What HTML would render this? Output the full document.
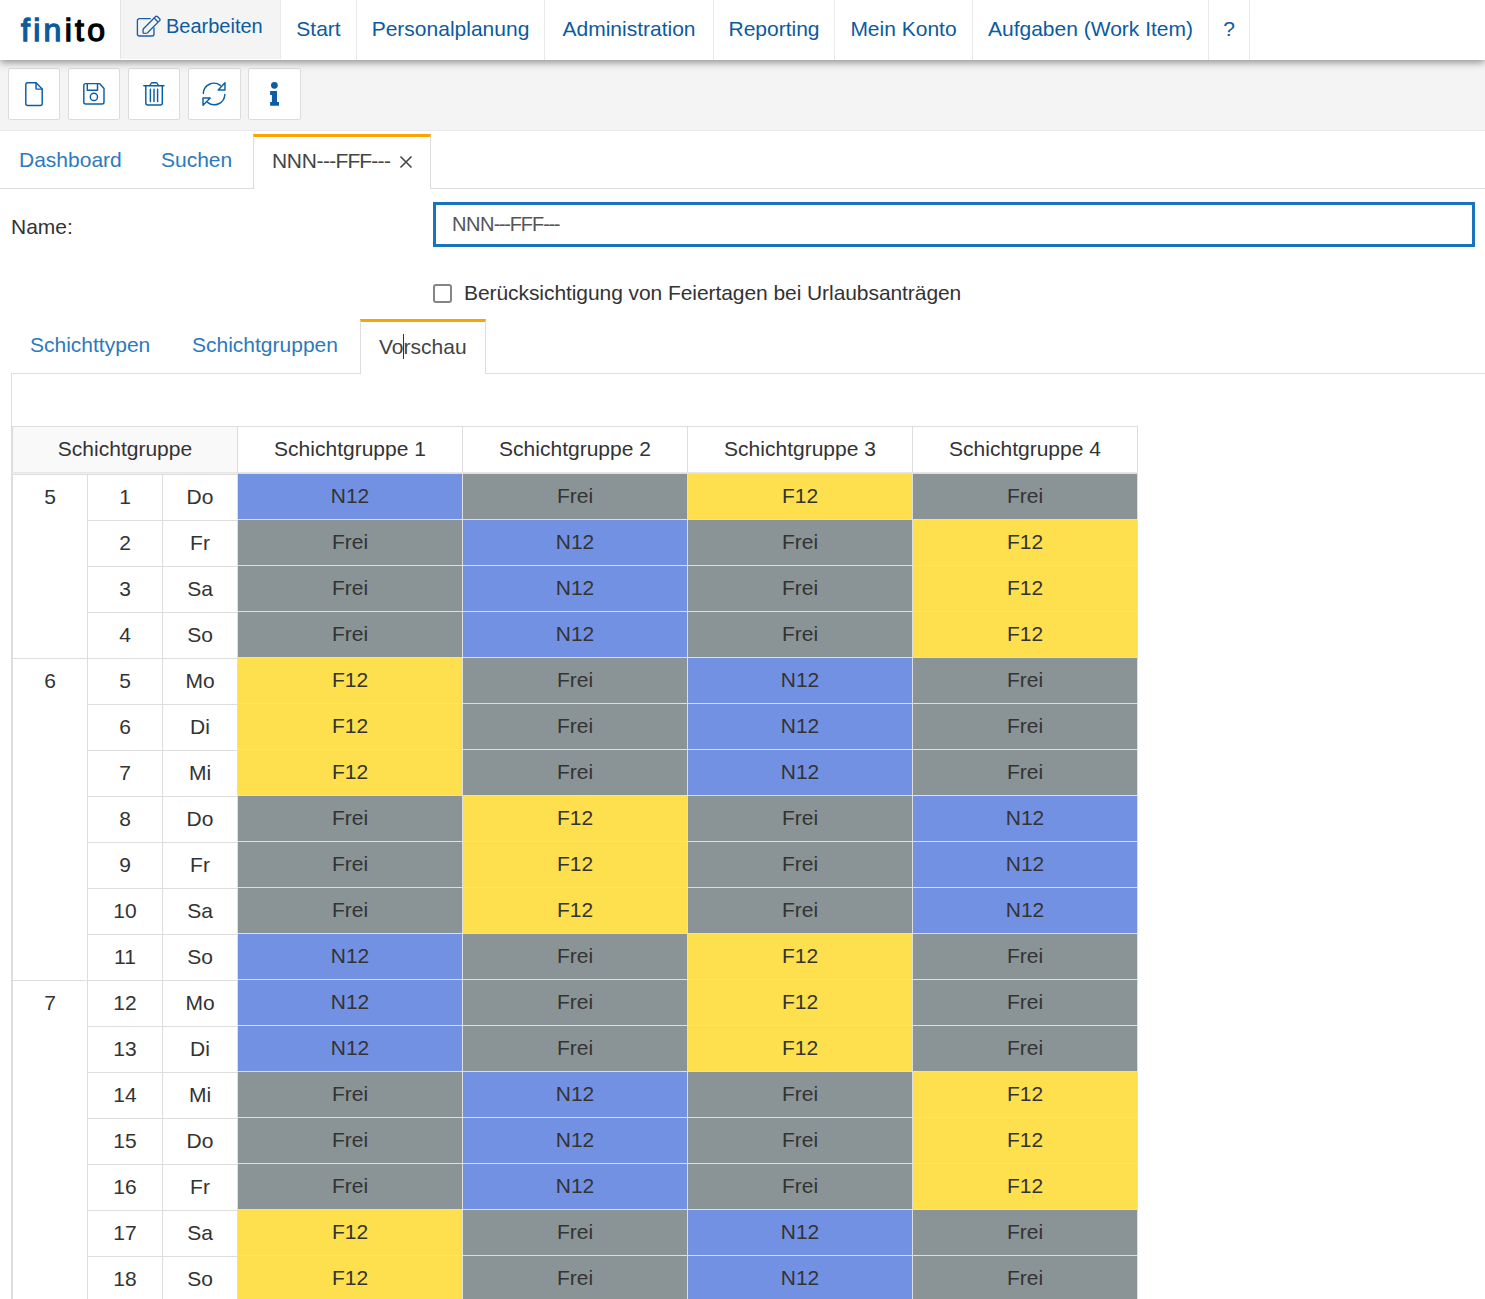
<!DOCTYPE html>
<html>
<head>
<meta charset="utf-8">
<style>
*{box-sizing:border-box;margin:0;padding:0}
html,body{width:1485px;height:1299px;overflow:hidden;background:#fff}
body{font-family:"Liberation Sans",sans-serif;color:#333;position:relative}
.abs{position:absolute}
#hdr{position:absolute;left:0;top:0;width:1485px;height:60px;background:#fff;box-shadow:0 2px 8px rgba(0,0,0,.45);z-index:5}
.logo{position:absolute;left:21px;top:10px;font-weight:normal;font-size:32px;letter-spacing:3.3px;line-height:40px;-webkit-text-stroke:1.3px currentColor}
.logo .b{color:#0b5a9e}.logo .k{color:#000}
.nav{position:absolute;top:0;height:60px;border-right:1px solid #e9e9e9;color:#0b5b9f;font-size:21px;line-height:58px;text-align:center;white-space:nowrap}
.nav.act{background:#f4f4f4;border-left:1px solid #e4e4e4;height:59px;line-height:56px}
#tb{position:absolute;left:0;top:60px;width:1485px;height:71px;background:#f4f4f4;border-bottom:1px solid #e9e9e9}
.btn{position:absolute;top:68px;width:52px;height:52px;background:#fff;border:1px solid #dcdcdc;border-radius:2px;z-index:2}
.tab{position:absolute;font-size:21px;line-height:24px;white-space:nowrap}
.lnk{color:#2c79bd}
.line{position:absolute;height:1px;background:#ddd}
.vl{position:absolute;width:1px;background:#ddd}
.tc{position:absolute;height:45px;line-height:43px;text-align:center;font-size:21px;color:#333}
.sc{color:#333}
.nb{background:#7391e3}.gr{background:#8a9395}.ye{background:#fee04f}
.hl{position:absolute;height:1px;background:#ddd}
</style>
</head>
<body>
<div id="hdr">
  <div class="logo"><span class="b">fin</span><span class="k">ito</span></div>
  <div class="nav act" style="left:120px;width:161px"><svg width="26" height="24" viewBox="0 0 26 24" style="position:absolute;left:14px;top:14px" fill="none" stroke="#1d5ca6" stroke-width="1.35" stroke-linejoin="round" stroke-linecap="round"><path d="M15.2 4.6 H4.4 a2 2 0 0 0 -2 2 V20 a2 2 0 0 0 2 2 H17 a2 2 0 0 0 2 -2 V14"/><path d="M8.2 15 L20.6 2.6 a1.3 1.3 0 0 1 1.8 0 L24.6 4.8 a1.3 1.3 0 0 1 0 1.8 L12.3 19 Q11 19.6 8.3 19.2 Q7.8 16.5 8.2 15 Z"/><path d="M19.1 4.1 L22.5 7.5"/></svg><span style="position:absolute;left:45px;top:-2px;font-size:20px">Bearbeiten</span></div>
  <div class="nav" style="left:281px;width:76px">Start</div>
  <div class="nav" style="left:357px;width:188px">Personalplanung</div>
  <div class="nav" style="left:545px;width:169px">Administration</div>
  <div class="nav" style="left:714px;width:121px">Reporting</div>
  <div class="nav" style="left:835px;width:138px">Mein Konto</div>
  <div class="nav" style="left:973px;width:236px">Aufgaben (Work Item)</div>
  <div class="nav" style="left:1209px;width:41px">?</div>
</div>
<div id="tb"></div>
<div class="btn" style="left:8px"></div>
<div class="btn" style="left:68px"></div>
<div class="btn" style="left:128px"></div>
<div class="btn" style="left:188px;width:53px"></div>
<div class="btn" style="left:248px;width:53px"></div>
<svg class="abs" style="left:0;top:0;z-index:3" width="320" height="130" viewBox="0 0 320 130" fill="none" stroke="#0b5ea5" stroke-width="1.45" stroke-linejoin="round" stroke-linecap="round">
  <!-- file -->
  <path d="M27.8 82.8 H36 L42.2 89 V103.5 a2 2 0 0 1 -2 2 H27.8 a2 2 0 0 1 -2 -2 V84.8 a2 2 0 0 1 2 -2 Z"/>
  <path d="M36 82.8 V88.6 a0.5 0.5 0 0 0 0.5 0.5 H42.2"/>
  <!-- save -->
  <path d="M85.8 83.6 H99.5 L104 88.6 V102 a2 2 0 0 1 -2 2 H85.8 a2 2 0 0 1 -2 -2 V85.6 a2 2 0 0 1 2 -2 Z"/>
  <path d="M87.3 83.6 V90.3 H97.5 V83.6"/>
  <circle cx="93.9" cy="96.9" r="3.6"/>
  <!-- trash -->
  <path d="M143.8 85.8 H164"/>
  <path d="M149.8 85.5 L151 83.5 a1.5 1.5 0 0 1 1.3 -0.8 H156 a1.5 1.5 0 0 1 1.3 0.8 L158.5 85.5"/>
  <path d="M145.8 86 V103 a2 2 0 0 0 2 2 H160.3 a2 2 0 0 0 2 -2 V86"/>
  <path d="M150.4 89.3 V101.6 M154 89.3 V101.6 M157.6 89.3 V101.6"/>
  <!-- sync -->
  <path d="M203.3 93.4 A10.6 10.6 0 0 1 220.3 85.4"/>
  <path d="M225 82.8 V89.9 H218.2 Z"/>
  <path d="M224.8 94.4 A10.6 10.6 0 0 1 207.6 102.4"/>
  <path d="M203 105.2 V98 H210.2 Z"/>
</svg>
<svg class="abs" style="left:0;top:0;z-index:3" width="320" height="130" viewBox="0 0 320 130" fill="#0b5ea5">
  <circle cx="274.4" cy="85.3" r="3.4"/>
  <path d="M270.1 91 H277 V102.1 H279 V105.8 H270.1 V102.1 H271.9 V95 H270.1 Z"/>
</svg>

<!-- top tabs -->
<div class="line" style="left:0;top:188px;width:1485px"></div>
<div class="tab lnk" style="left:19px;top:148px">Dashboard</div>
<div class="tab lnk" style="left:161px;top:148px">Suchen</div>
<div class="abs" style="left:253px;top:134px;width:178px;height:55px;background:#fff;border:1px solid #ddd;border-top:3px solid #f9a400;border-bottom:none"></div>
<div class="tab" style="left:272px;top:149px;color:#444"><span style="letter-spacing:-0.3px">NNN</span><span style="letter-spacing:-0.7px">---</span><span style="letter-spacing:-0.9px">FFF</span><span style="letter-spacing:-0.7px">---</span></div>
<svg class="abs" style="left:399px;top:155px" width="14" height="14" viewBox="0 0 14 14" stroke="#444" stroke-width="1.6"><path d="M1.5 1.5 L12.5 12.5 M12.5 1.5 L1.5 12.5"/></svg>

<!-- form -->
<div class="tab" style="left:11px;top:215px;color:#333">Name:</div>
<div class="abs" style="left:433px;top:202px;width:1042px;height:45px;border:3px solid #1a74bd"></div>
<div class="tab" style="left:452px;top:212px;color:#555;font-size:20px"><span style="letter-spacing:-0.5px">NNN</span><span style="letter-spacing:-1.4px">---</span><span style="letter-spacing:-1px">FFF</span><span style="letter-spacing:-1.4px">---</span></div>
<div class="abs" style="left:433px;top:284px;width:19px;height:19px;border:2px solid #858585;border-radius:3px"></div>
<div class="tab" style="left:464px;top:281px;color:#333;letter-spacing:-0.07px">Berücksichtigung von Feiertagen bei Urlaubsanträgen</div>

<!-- inner tabs -->
<div class="line" style="left:11px;top:373px;width:1474px"></div>
<div class="vl" style="left:11px;top:373px;height:926px"></div>
<div class="tab lnk" style="left:30px;top:333px">Schichttypen</div>
<div class="tab lnk" style="left:192px;top:333px">Schichtgruppen</div>
<div class="abs" style="left:360px;top:319px;width:126px;height:55px;background:#fff;border:1px solid #ddd;border-top:3px solid #f9a400;border-bottom:none"></div>
<div class="tab" style="left:379px;top:335px;color:#444">Vorschau</div>
<div class="abs" style="left:403px;top:334px;width:1px;height:25px;background:#333"></div>

<!-- table -->
<div class="abs" style="left:12px;top:426px;width:1126px;height:873px;border:1px solid #ddd;border-bottom:none"></div>
<div class="abs" style="left:13px;top:427px;width:224px;height:45px;background:#f9f9f9"></div>
<div class="abs" style="left:12px;top:472px;width:1126px;height:1px;background:#e6e6e6"></div>
<div class="abs" style="left:12px;top:473px;width:1126px;height:1px;background:#eeeeee"></div>
<div class="abs" style="left:12px;top:474px;width:225px;height:1px;background:#dddddd"></div>
<div class="vl" style="left:237px;top:427px;height:872px"></div>
<div class="vl" style="left:462px;top:427px;height:45px"></div>
<div class="vl" style="left:687px;top:427px;height:45px"></div>
<div class="vl" style="left:912px;top:427px;height:45px"></div>
<div class="vl" style="left:87px;top:475px;height:824px"></div>
<div class="vl" style="left:162px;top:475px;height:824px"></div>
<div class="tc" style="left:13px;top:427px;width:224px">Schichtgruppe</div>
<div class="tc" style="left:238px;top:427px;width:224px">Schichtgruppe 1</div>
<div class="tc" style="left:463px;top:427px;width:224px">Schichtgruppe 2</div>
<div class="tc" style="left:688px;top:427px;width:224px">Schichtgruppe 3</div>
<div class="tc" style="left:913px;top:427px;width:224px">Schichtgruppe 4</div>
<div class="abs" style="left:237px;top:473px;width:901px;height:826px;background:#dedede"></div>
<div id="tbody">

<div class="tc" style="left:13px;top:475px;width:74px">5</div>
<div class="tc" style="left:88px;top:475px;width:74px">1</div>
<div class="tc" style="left:163px;top:475px;width:74px">Do</div>
<div class="tc sc nb" style="left:238px;top:474px;width:224px">N12</div>
<div class="tc sc gr" style="left:463px;top:474px;width:224px">Frei</div>
<div class="tc sc ye" style="left:688px;top:474px;width:224px">F12</div>
<div class="tc sc gr" style="left:913px;top:474px;width:224px">Frei</div>
<div class="hl" style="left:87px;top:520px;width:150px"></div>
<div class="tc" style="left:88px;top:521px;width:74px">2</div>
<div class="tc" style="left:163px;top:521px;width:74px">Fr</div>
<div class="tc sc gr" style="left:238px;top:520px;width:224px">Frei</div>
<div class="tc sc nb" style="left:463px;top:520px;width:224px">N12</div>
<div class="tc sc gr" style="left:688px;top:520px;width:224px">Frei</div>
<div class="tc sc ye" style="left:913px;top:520px;width:224px">F12</div>
<div class="hl" style="left:87px;top:566px;width:150px"></div>
<div class="tc" style="left:88px;top:567px;width:74px">3</div>
<div class="tc" style="left:163px;top:567px;width:74px">Sa</div>
<div class="tc sc gr" style="left:238px;top:566px;width:224px">Frei</div>
<div class="tc sc nb" style="left:463px;top:566px;width:224px">N12</div>
<div class="tc sc gr" style="left:688px;top:566px;width:224px">Frei</div>
<div class="tc sc ye" style="left:913px;top:566px;width:224px">F12</div>
<div class="hl" style="left:87px;top:612px;width:150px"></div>
<div class="tc" style="left:88px;top:613px;width:74px">4</div>
<div class="tc" style="left:163px;top:613px;width:74px">So</div>
<div class="tc sc gr" style="left:238px;top:612px;width:224px">Frei</div>
<div class="tc sc nb" style="left:463px;top:612px;width:224px">N12</div>
<div class="tc sc gr" style="left:688px;top:612px;width:224px">Frei</div>
<div class="tc sc ye" style="left:913px;top:612px;width:224px">F12</div>
<div class="hl" style="left:12px;top:658px;width:225px"></div>
<div class="tc" style="left:13px;top:659px;width:74px">6</div>
<div class="tc" style="left:88px;top:659px;width:74px">5</div>
<div class="tc" style="left:163px;top:659px;width:74px">Mo</div>
<div class="tc sc ye" style="left:238px;top:658px;width:224px">F12</div>
<div class="tc sc gr" style="left:463px;top:658px;width:224px">Frei</div>
<div class="tc sc nb" style="left:688px;top:658px;width:224px">N12</div>
<div class="tc sc gr" style="left:913px;top:658px;width:224px">Frei</div>
<div class="hl" style="left:87px;top:704px;width:150px"></div>
<div class="tc" style="left:88px;top:705px;width:74px">6</div>
<div class="tc" style="left:163px;top:705px;width:74px">Di</div>
<div class="tc sc ye" style="left:238px;top:704px;width:224px">F12</div>
<div class="tc sc gr" style="left:463px;top:704px;width:224px">Frei</div>
<div class="tc sc nb" style="left:688px;top:704px;width:224px">N12</div>
<div class="tc sc gr" style="left:913px;top:704px;width:224px">Frei</div>
<div class="hl" style="left:87px;top:750px;width:150px"></div>
<div class="tc" style="left:88px;top:751px;width:74px">7</div>
<div class="tc" style="left:163px;top:751px;width:74px">Mi</div>
<div class="tc sc ye" style="left:238px;top:750px;width:224px">F12</div>
<div class="tc sc gr" style="left:463px;top:750px;width:224px">Frei</div>
<div class="tc sc nb" style="left:688px;top:750px;width:224px">N12</div>
<div class="tc sc gr" style="left:913px;top:750px;width:224px">Frei</div>
<div class="hl" style="left:87px;top:796px;width:150px"></div>
<div class="tc" style="left:88px;top:797px;width:74px">8</div>
<div class="tc" style="left:163px;top:797px;width:74px">Do</div>
<div class="tc sc gr" style="left:238px;top:796px;width:224px">Frei</div>
<div class="tc sc ye" style="left:463px;top:796px;width:224px">F12</div>
<div class="tc sc gr" style="left:688px;top:796px;width:224px">Frei</div>
<div class="tc sc nb" style="left:913px;top:796px;width:224px">N12</div>
<div class="hl" style="left:87px;top:842px;width:150px"></div>
<div class="tc" style="left:88px;top:843px;width:74px">9</div>
<div class="tc" style="left:163px;top:843px;width:74px">Fr</div>
<div class="tc sc gr" style="left:238px;top:842px;width:224px">Frei</div>
<div class="tc sc ye" style="left:463px;top:842px;width:224px">F12</div>
<div class="tc sc gr" style="left:688px;top:842px;width:224px">Frei</div>
<div class="tc sc nb" style="left:913px;top:842px;width:224px">N12</div>
<div class="hl" style="left:87px;top:888px;width:150px"></div>
<div class="tc" style="left:88px;top:889px;width:74px">10</div>
<div class="tc" style="left:163px;top:889px;width:74px">Sa</div>
<div class="tc sc gr" style="left:238px;top:888px;width:224px">Frei</div>
<div class="tc sc ye" style="left:463px;top:888px;width:224px">F12</div>
<div class="tc sc gr" style="left:688px;top:888px;width:224px">Frei</div>
<div class="tc sc nb" style="left:913px;top:888px;width:224px">N12</div>
<div class="hl" style="left:87px;top:934px;width:150px"></div>
<div class="tc" style="left:88px;top:935px;width:74px">11</div>
<div class="tc" style="left:163px;top:935px;width:74px">So</div>
<div class="tc sc nb" style="left:238px;top:934px;width:224px">N12</div>
<div class="tc sc gr" style="left:463px;top:934px;width:224px">Frei</div>
<div class="tc sc ye" style="left:688px;top:934px;width:224px">F12</div>
<div class="tc sc gr" style="left:913px;top:934px;width:224px">Frei</div>
<div class="hl" style="left:12px;top:980px;width:225px"></div>
<div class="tc" style="left:13px;top:981px;width:74px">7</div>
<div class="tc" style="left:88px;top:981px;width:74px">12</div>
<div class="tc" style="left:163px;top:981px;width:74px">Mo</div>
<div class="tc sc nb" style="left:238px;top:980px;width:224px">N12</div>
<div class="tc sc gr" style="left:463px;top:980px;width:224px">Frei</div>
<div class="tc sc ye" style="left:688px;top:980px;width:224px">F12</div>
<div class="tc sc gr" style="left:913px;top:980px;width:224px">Frei</div>
<div class="hl" style="left:87px;top:1026px;width:150px"></div>
<div class="tc" style="left:88px;top:1027px;width:74px">13</div>
<div class="tc" style="left:163px;top:1027px;width:74px">Di</div>
<div class="tc sc nb" style="left:238px;top:1026px;width:224px">N12</div>
<div class="tc sc gr" style="left:463px;top:1026px;width:224px">Frei</div>
<div class="tc sc ye" style="left:688px;top:1026px;width:224px">F12</div>
<div class="tc sc gr" style="left:913px;top:1026px;width:224px">Frei</div>
<div class="hl" style="left:87px;top:1072px;width:150px"></div>
<div class="tc" style="left:88px;top:1073px;width:74px">14</div>
<div class="tc" style="left:163px;top:1073px;width:74px">Mi</div>
<div class="tc sc gr" style="left:238px;top:1072px;width:224px">Frei</div>
<div class="tc sc nb" style="left:463px;top:1072px;width:224px">N12</div>
<div class="tc sc gr" style="left:688px;top:1072px;width:224px">Frei</div>
<div class="tc sc ye" style="left:913px;top:1072px;width:224px">F12</div>
<div class="hl" style="left:87px;top:1118px;width:150px"></div>
<div class="tc" style="left:88px;top:1119px;width:74px">15</div>
<div class="tc" style="left:163px;top:1119px;width:74px">Do</div>
<div class="tc sc gr" style="left:238px;top:1118px;width:224px">Frei</div>
<div class="tc sc nb" style="left:463px;top:1118px;width:224px">N12</div>
<div class="tc sc gr" style="left:688px;top:1118px;width:224px">Frei</div>
<div class="tc sc ye" style="left:913px;top:1118px;width:224px">F12</div>
<div class="hl" style="left:87px;top:1164px;width:150px"></div>
<div class="tc" style="left:88px;top:1165px;width:74px">16</div>
<div class="tc" style="left:163px;top:1165px;width:74px">Fr</div>
<div class="tc sc gr" style="left:238px;top:1164px;width:224px">Frei</div>
<div class="tc sc nb" style="left:463px;top:1164px;width:224px">N12</div>
<div class="tc sc gr" style="left:688px;top:1164px;width:224px">Frei</div>
<div class="tc sc ye" style="left:913px;top:1164px;width:224px">F12</div>
<div class="hl" style="left:87px;top:1210px;width:150px"></div>
<div class="tc" style="left:88px;top:1211px;width:74px">17</div>
<div class="tc" style="left:163px;top:1211px;width:74px">Sa</div>
<div class="tc sc ye" style="left:238px;top:1210px;width:224px">F12</div>
<div class="tc sc gr" style="left:463px;top:1210px;width:224px">Frei</div>
<div class="tc sc nb" style="left:688px;top:1210px;width:224px">N12</div>
<div class="tc sc gr" style="left:913px;top:1210px;width:224px">Frei</div>
<div class="hl" style="left:87px;top:1256px;width:150px"></div>
<div class="tc" style="left:88px;top:1257px;width:74px">18</div>
<div class="tc" style="left:163px;top:1257px;width:74px">So</div>
<div class="tc sc ye" style="left:238px;top:1256px;width:224px">F12</div>
<div class="tc sc gr" style="left:463px;top:1256px;width:224px">Frei</div>
<div class="tc sc nb" style="left:688px;top:1256px;width:224px">N12</div>
<div class="tc sc gr" style="left:913px;top:1256px;width:224px">Frei</div>
</div>
</body>
</html>
